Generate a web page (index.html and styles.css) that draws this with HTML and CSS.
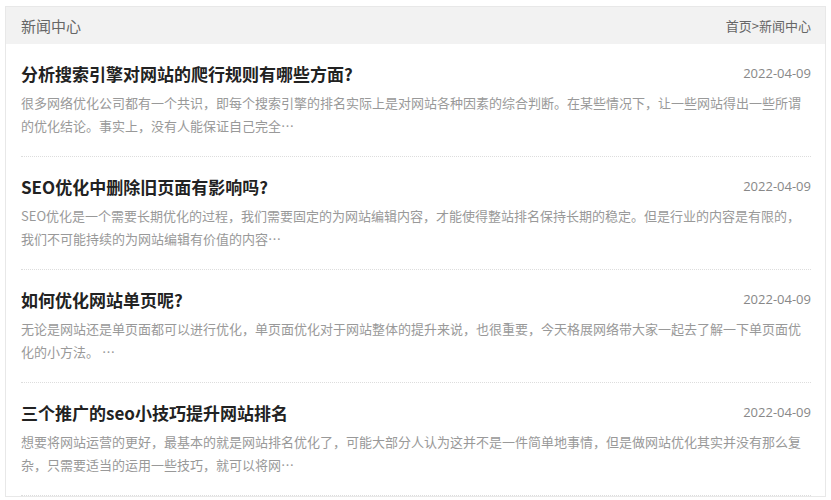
FILE: index.html
```html
<!DOCTYPE html>
<html lang="zh-CN">
<head>
    <meta charset="UTF-8">
    <meta name="viewport" content="width=device-width, initial-scale=1.0">
    <title>新闻中心</title>
    <link rel="stylesheet" href="styles.css">
</head>
<body>
    <div class="news-box">
        <div class="news-head">
            <span class="news-title">新闻中心</span>
            <span class="crumb"><a href="#">首页</a>&gt;<a href="#">新闻中心</a></span>
        </div>
        <ul class="news-list">
            <li class="news-item">
                <div class="item-top">
                    <a class="item-title" href="#">分析搜索引擎对网站的爬行规则有哪些方面?</a>
                    <span class="item-date">2022-04-09</span>
                </div>
                <p class="item-desc">很多网络优化公司都有一个共识，即每个搜索引擎的排名实际上是对网站各种因素的综合判断。在某些情况下，让一些网站得出一些所谓的优化结论。事实上，没有人能保证自己完全…</p>
            </li>
            <li class="news-item">
                <div class="item-top">
                    <a class="item-title" href="#">SEO优化中删除旧页面有影响吗?</a>
                    <span class="item-date">2022-04-09</span>
                </div>
                <p class="item-desc">SEO优化是一个需要长期优化的过程，我们需要固定的为网站编辑内容，才能使得整站排名保持长期的稳定。但是行业的内容是有限的，我们不可能持续的为网站编辑有价值的内容…</p>
            </li>
            <li class="news-item">
                <div class="item-top">
                    <a class="item-title" href="#">如何优化网站单页呢?</a>
                    <span class="item-date">2022-04-09</span>
                </div>
                <p class="item-desc">无论是网站还是单页面都可以进行优化，单页面优化对于网站整体的提升来说，也很重要，今天格展网络带大家一起去了解一下单页面优化的小方法。 …</p>
            </li>
            <li class="news-item">
                <div class="item-top">
                    <a class="item-title" href="#">三个推广的seo小技巧提升网站排名</a>
                    <span class="item-date">2022-04-09</span>
                </div>
                <p class="item-desc">想要将网站运营的更好，最基本的就是网站排名优化了，可能大部分人认为这并不是一件简单地事情，但是做网站优化其实并没有那么复杂，只需要适当的运用一些技巧，就可以将网…</p>
            </li>
        </ul>
    </div>
</body>
</html>
```

FILE: styles.css
```css
body {
    margin: 6px 5px;
    font-family: "Noto Sans CJK SC", "Noto Sans", sans-serif;
    background: #fff;
    color: #333;
}
a {
    text-decoration: none;
    color: inherit;
}
.news-box {
    border: 1px solid #e8e8e8;
}
.news-head {
    display: flex;
    justify-content: space-between;
    align-items: center;
    height: 37px;
    padding: 0 14px 0 15px;
    background: #f2f2f2;
    color: #666;
}
.news-title {
    font-size: 15px;
}
.crumb {
    font-size: 13px;
}
.news-list {
    list-style: none;
    margin: 0;
    padding: 0 14px 0 15px;
}
.news-item {
    padding: 17px 0 19px;
    border-bottom: 1px dotted #ddd;
}
.item-top {
    display: flex;
    justify-content: space-between;
    align-items: center;
    height: 24px;
}
.item-title {
    font-size: 17px;
    font-weight: bold;
    color: #222;
}
.item-date {
    font-size: 13px;
    color: #888;
    font-family: "Open Sans", "Noto Sans", sans-serif;
}
.item-desc {
    margin: 6px 0 0;
    font-size: 13px;
    line-height: 23px;
    color: #999;
}
```
